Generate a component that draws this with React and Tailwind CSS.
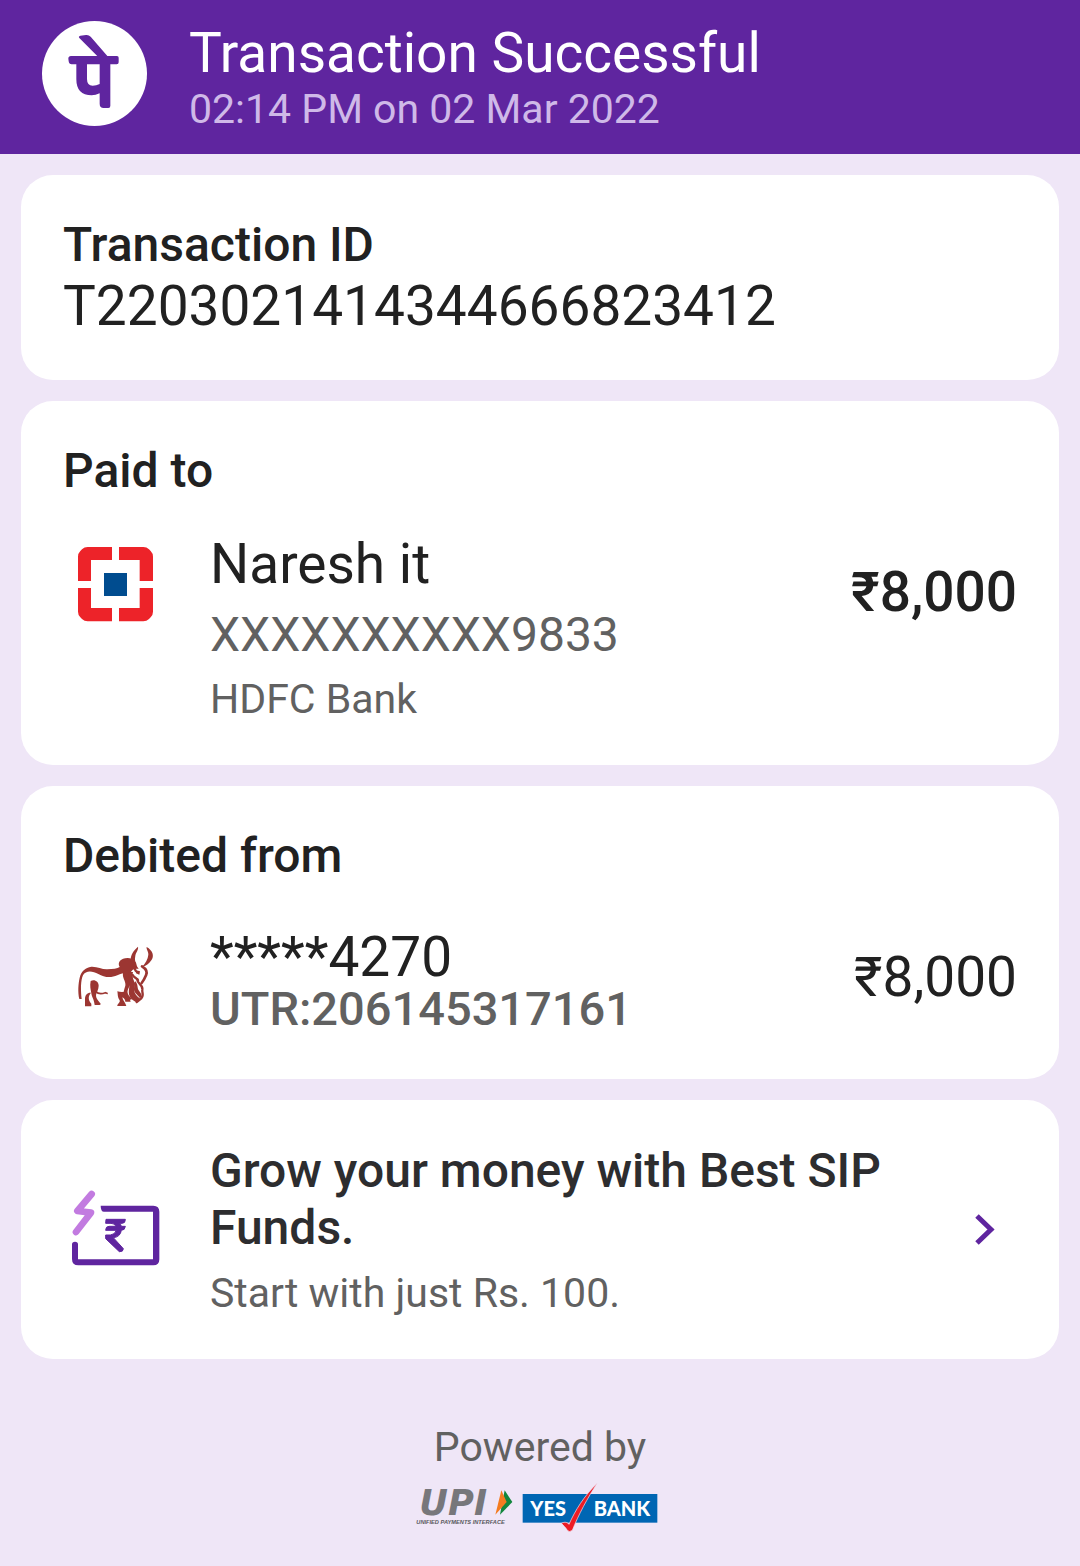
function PhonePeLogo() {
  return (
    <svg className="size-[105px] shrink-0" viewBox="36 33 315 315" role="img" aria-label="PhonePe">
      <circle cx="193.5" cy="190.500" r="157.500" fill="#fff" />
      <g fill="#5f259f">
        <path d="M148 84 Q144 79 151 77 L168 75 Q176 74 182 80 L234 140 H204 Z" />
        <path d="M123 138 H261 Q266 138 266 143 V157 Q266 163 260 163 H241 V288 Q241 294 235 294 H221 Q209 294 209 281 V250 Q197 256 185 256 Q139 256 139 208 V163 H125 Q117 163 116 154 L115 146 Q115 138 123 138 Z M171 163 V207 Q171 227 188 227 Q199 227 209 222 V163 Z" fillRule="evenodd" />
      </g>
    </svg>
  );
}

function HdfcLogo() {
  return (
    <svg className="size-[105px] shrink-0" viewBox="-6 6 315 315" role="img" aria-label="HDFC Bank">
      <g fill="#ed2329">
        <path d="M141 51 H68 Q58 51 51 58 L46 63 Q39 70 39 80 V153 H78 V90 H141 Z" />
        <path d="M162 51 H235 Q245 51 252 58 L257 63 Q264 70 264 80 V153 H224 V90 H162 Z" />
        <path d="M39 174 H78 V234 H141 V274 H68 Q58 274 51 267 L46 262 Q39 255 39 245 Z" />
        <path d="M264 174 V245 Q264 255 257 262 L252 267 Q245 274 235 274 H162 V234 H224 V174 Z" />
      </g>
      <rect x="117" y="129" width="69" height="69" fill="#004c8f" />
    </svg>
  );
}

function BullLogo() {
  return (
    <svg className="size-[105px] shrink-0" viewBox="-6 -15 315 315" role="img" aria-label="Debited bank account">
      <g fill="#9c3632">
        <path d="M43 207 C38 186 40 160 44 143 C48 125 61 112 79 110 C98 109 111 119 127 118 C144 117 157 116 164 111 C156 98 167 84 188 84 C205 84 215 95 215 107 L221 117 C207 115 201 119 196 130 C183 128 171 129 157 136 C137 145 117 142 100 132 C82 122 62 121 54 136 C47 151 47 178 50 207 Z" />
        <path d="M219 50 C206 61 196 76 197 91 C199 104 206 111 217 113 C211 100 208 90 211 77 C213 66 221 60 219 50 Z" />
        <path d="M245 51 C263 61 269 78 259 91 C253 101 243 109 231 111 C241 99 249 88 250 74 C251 64 243 58 245 51 Z" />
        <path d="M77 153 C89 147 101 155 101 167 C101 179 94 188 93 195 C93 207 101 213 107 221 Q107 225 103 225 H89 C87 208 80 200 79 190 C77 177 74 168 77 153 Z" />
        <path d="M78 188 C70 197 68 208 79 221 L79 229 H60 V206 C60 195 67 187 78 188 Z" />
        <path d="M157 184 C167 187 177 187 185 183 C180 198 194 201 197 215 H181 C181 209 177 204 172 202 C173 211 182 219 184 228 H157 C157 221 166 219 164 211 C157 201 159 194 157 184 Z" />
        <path d="M194 120 C188 146 202 154 194 168 C184 185 185 192 202 207 L191 211 C168 194 178 179 181 167 C184 153 169 143 175 125 Z" />
        <path d="M204 126 C198 146 213 153 208 170 C204 184 212 195 223 204 C229 210 220 219 211 215 C187 202 191 184 193 170 C195 155 185 144 192 126 Z" />
        <path d="M211 154 C220 164 216 173 221 181 C227 191 232 191 226 206 C215 190 206 190 207 175 C209 164 204 159 211 154 Z" />
        <path d="M211 120 L225 124 L223 134 L213 130 Z" />
      </g>
      <g fill="none" stroke="#9c3632" strokeLinecap="round" strokeLinejoin="round">
        <path d="M92 185 C102 194 111 192 121 188 L126 190" strokeWidth="5" />
        <path d="M231 109 C243 116 248 125 243 136 C238 148 235 153 230 159" strokeWidth="8" />
        <path d="M217 148 C216 162 235 164 232 179 C230 187 238 194 229 205 L215 216" strokeWidth="7" />
        <path d="M207 112 L212 122 M203 135 C207 143 217 145 219 151" strokeWidth="7" />
      </g>
    </svg>
  );
}

function SipIcon() {
  return (
    <svg className="size-[105px] shrink-0" viewBox="9 -9 315 315" fill="none" aria-hidden="true">
      <path d="M95 42 L52 93 L93 98 L48 156" stroke="#c27be0" strokeWidth="20" strokeLinecap="round" strokeLinejoin="round" />
      <path d="M122 77 H280 Q298 77 298 95 V238 Q298 256 280 256 H55 Q36 256 36 237 V193 Q36 185 45 185 Q54 185 54 193 V238 H279 V95 H132 Q122 95 122 77 Z" fill="#5f259f" />
      <path d="M138 118 H196 Q196 130 187 130 H179 Q183 134 184 139 H196 Q195 151 184 151 Q181 171 160 173 L190 206 Q190 216 178 215 L137 176 V165 H151 Q165 164 169 151 H137 Q137 139 147 139 H168 Q164 130 153 130 H137 Z" fill="#5f259f" stroke="#5f259f" strokeWidth="3" />
    </svg>
  );
}

function UpiLogo() {
  return (
    <svg className="h-[70px] w-[100px]" viewBox="45 0 300 210" role="img" aria-label="UPI, Unified Payments Interface">
      <text x="58" y="119" fontFamily="DejaVu Sans, sans-serif" fontSize="106" fontStyle="italic" fontWeight="700" fill="#77777b">UPI</text>
      <path d="M314 46 L337 81 L300 119 Z" fill="#11863c" />
      <path d="M304 46 L320 81 L286 119 Z" fill="#f47b20" />
      <text x="49" y="147" fontFamily="Liberation Sans, sans-serif" fontSize="17" fontStyle="italic" fontWeight="700" fill="#58585c">UNIFIED PAYMENTS INTERFACE</text>
    </svg>
  );
}

function YesBankLogo() {
  return (
    <svg className="h-[70px] w-[145px]" viewBox="360 0 435 210" role="img" aria-label="Yes Bank">
      <rect x="368" y="57" width="404" height="86" fill="#0066b3" />
      <g fontFamily="Lato, sans-serif" fontSize="60" fontWeight="900" fill="#fff">
        <text x="391" y="122">YES</text>
        <text x="581" y="122">BANK</text>
      </g>
      <path d="M484 145 C495 139 502 142 507 148 C525 107 552 63 592 24 C562 70 535 120 517 166 Q508 173 502 166 C497 157 491 152 484 145 Z" fill="#ed1c24" stroke="#efe6f7" strokeWidth="2" />
    </svg>
  );
}

function Card({ title, children }) {
  return (
    <section className="rounded-[32px] bg-white p-[42px]">
      <h2 className="text-[48px] leading-[56px] font-medium">{title}</h2>
      {children}
    </section>
  );
}

export default function App() {
  return (
    <div className="min-h-screen bg-[#efe6f7] font-[Roboto,sans-serif] text-[#212121]">
      <header className="flex items-start gap-[42px] bg-[#5f259f] px-[42px] py-[21px]">
        <PhonePeLogo />
        <div>
          <h1 className="text-[55px] leading-[64px] text-white">Transaction Successful</h1>
          <p className="text-[41px] leading-[48px] text-[#cfb9e8]">02:14 PM on 02 Mar 2022</p>
        </div>
      </header>

      <main className="flex flex-col gap-[21px] p-[21px]">
        <Card title="Transaction ID">
          <p className="mt-px text-[55px] leading-[64px]">T2203021414344666823412</p>
        </Card>

        <Card title="Paid to">
          <div className="mt-[33px] flex items-start gap-[42px]">
            <HdfcLogo />
            <div className="min-w-0 flex-1">
              <p className="text-[55px] leading-[64px]">Naresh it</p>
              <p className="mt-[11px] text-[48px] leading-[56px] text-[#616161]">XXXXXXXXXX9833</p>
              <p className="mt-3 text-[41px] leading-[48px] text-[#616161]">HDFC Bank</p>
            </div>
            <p className="pt-7 text-[55px] leading-[64px] font-medium">₹8,000</p>
          </div>
        </Card>

        <Card title="Debited from">
          <div className="mt-[33px] flex items-center gap-[42px]">
            <BullLogo />
            <div className="min-w-0 flex-1 py-2">
              <p className="text-[55px] leading-[64px]">*****4270</p>
              <p className="text-[47px] leading-[40px] font-medium text-[#616161]">UTR:206145317161</p>
            </div>
            <p className="text-[55px] leading-[64px]">₹8,000</p>
          </div>
        </Card>

        <a href="#sip-funds" className="flex items-center gap-[42px] rounded-[32px] bg-white p-[42px]">
          <SipIcon />
          <div className="min-w-0 flex-1">
            <p className="text-[48px] leading-[57px] font-medium text-[#2d2d2f]">Grow your money with Best SIP Funds.</p>
            <p className="mt-[13px] text-[41px] leading-[48px] text-[#616161]">Start with just Rs. 100.</p>
          </div>
          <svg className="size-[63px] shrink-0" viewBox="0 0 63 63" fill="none" aria-hidden="true">
            <path d="M23 18 L37 31.500 L23 45" stroke="#5f259f" strokeWidth="5" />
          </svg>
        </a>
      </main>

      <footer className="flex flex-col items-center pt-[43px]">
        <p className="text-[41px] leading-[48px] text-[#616161]">Powered by</p>
        <div className="mt-1 flex gap-[5px]">
          <UpiLogo />
          <YesBankLogo />
        </div>
      </footer>
    </div>
  );
}
